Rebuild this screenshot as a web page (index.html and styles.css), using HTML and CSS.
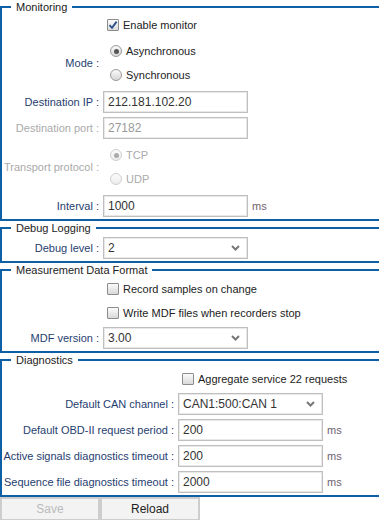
FILE: index.html
```html
<!DOCTYPE html>
<html lang="en">

<head>
    <meta charset="UTF-8">
    <meta name="viewport" content="width=device-width, initial-scale=1.0">
    <title>Settings</title>
    <link rel="stylesheet" href="styles.css">
</head>

<body>
    <form class="settings">
        <fieldset class="group">
            <legend>Monitoring</legend>
            <div class="rows">
                <div class="row row-check first">
                    <span class="lbl"></span>
                    <label class="check"><span class="box"><svg width="10" height="10" viewBox="0 0 10 10"><path d="M1.5 5.2 L4 7.8 L8.6 1.6" fill="none" stroke="#2c4f8c" stroke-width="1.8"/></svg></span>Enable monitor</label>
                </div>
                <div class="row row-radios">
                    <span class="lbl">Mode :</span>
                    <div class="radios">
                        <label class="radio"><span class="dot on"></span>Asynchronous</label>
                        <label class="radio"><span class="dot"></span>Synchronous</label>
                    </div>
                </div>
                <div class="row">
                    <span class="lbl">Destination IP :</span>
                    <input type="text" class="field" value="212.181.102.20">
                </div>
                <div class="row">
                    <span class="lbl off">Destination port :</span>
                    <input type="text" class="field" value="27182" disabled>
                </div>
                <div class="row row-radios">
                    <span class="lbl off">Transport protocol :</span>
                    <div class="radios off">
                        <label class="radio"><span class="dot on"></span>TCP</label>
                        <label class="radio"><span class="dot"></span>UDP</label>
                    </div>
                </div>
                <div class="row">
                    <span class="lbl">Interval :</span>
                    <input type="text" class="field" value="1000">
                    <span class="unit">ms</span>
                </div>
            </div>
        </fieldset>

        <fieldset class="group">
            <legend>Debug Logging</legend>
            <div class="rows">
                <div class="row">
                    <span class="lbl">Debug level :</span>
                    <div class="pick">
                        <select class="field"><option>2</option></select>
                        <svg class="chev" width="9" height="6" viewBox="0 0 9 6"><path d="M1 1 L4.5 4.5 L8 1" fill="none" stroke="#777" stroke-width="2"/></svg>
                    </div>
                </div>
            </div>
        </fieldset>

        <fieldset class="group">
            <legend>Measurement Data Format</legend>
            <div class="rows">
                <div class="row row-check">
                    <span class="lbl"></span>
                    <label class="check"><span class="box"></span>Record samples on change</label>
                </div>
                <div class="row row-check">
                    <span class="lbl"></span>
                    <label class="check"><span class="box"></span>Write MDF files when recorders stop</label>
                </div>
                <div class="row">
                    <span class="lbl">MDF version :</span>
                    <div class="pick">
                        <select class="field"><option>3.00</option></select>
                        <svg class="chev" width="9" height="6" viewBox="0 0 9 6"><path d="M1 1 L4.5 4.5 L8 1" fill="none" stroke="#777" stroke-width="2"/></svg>
                    </div>
                </div>
            </div>
        </fieldset>

        <fieldset class="group wide">
            <legend>Diagnostics</legend>
            <div class="rows">
                <div class="row row-check">
                    <span class="lbl"></span>
                    <label class="check"><span class="box"></span>Aggregate service 22 requests</label>
                </div>
                <div class="row">
                    <span class="lbl">Default CAN channel :</span>
                    <div class="pick">
                        <select class="field"><option>CAN1:500:CAN 1</option></select>
                        <svg class="chev" width="9" height="6" viewBox="0 0 9 6"><path d="M1 1 L4.5 4.5 L8 1" fill="none" stroke="#777" stroke-width="2"/></svg>
                    </div>
                </div>
                <div class="row">
                    <span class="lbl">Default OBD-II request period :</span>
                    <input type="text" class="field" value="200">
                    <span class="unit">ms</span>
                </div>
                <div class="row">
                    <span class="lbl">Active signals diagnostics timeout :</span>
                    <input type="text" class="field" value="200">
                    <span class="unit">ms</span>
                </div>
                <div class="row">
                    <span class="lbl">Sequence file diagnostics timeout :</span>
                    <input type="text" class="field" value="2000">
                    <span class="unit">ms</span>
                </div>
            </div>
        </fieldset>

        <div class="actions">
            <button type="button" disabled>Save</button>
            <button type="button">Reload</button>
        </div>
    </form>
</body>

</html>
```

FILE: styles.css
```css
body {
    margin: 0;
    background-color: #fff;
    font-family: 'Liberation Sans', Arial, sans-serif;
    font-size: 11px;
    color: #222;
    overflow: hidden;
}

.settings {
    margin: 0;
}

.group {
    margin: 0;
    padding: 0;
    border: 2px solid #0d5fa6;
    border-right: none;
    min-inline-size: 0;
}

.group legend {
    margin-left: 9px;
    padding: 0 5px;
    font-size: 11px;
    line-height: 14px;
    color: #222;
}

.rows {
    display: flex;
    flex-direction: column;
    gap: 4px;
    padding: 2px 0;
}

.row {
    display: flex;
    align-items: center;
    height: 22px;
}

.row-check {
    height: 20px;
}

.row-check.first {
    height: 18px;
    margin-bottom: 1px;
}

.row-radios {
    height: 48px;
}

.lbl {
    flex: none;
    width: 101px;
    padding-right: 4px;
    box-sizing: border-box;
    text-align: right;
    color: #1f3e70;
    white-space: nowrap;
}

.wide .lbl {
    width: 176px;
}

.lbl.off {
    color: #aaa;
}

/* checkboxes */
.check {
    display: flex;
    align-items: center;
    color: #222;
}

.box {
    display: flex;
    align-items: center;
    justify-content: center;
    width: 12px;
    height: 12px;
    margin: 0 4px 0 4px;
    box-sizing: border-box;
    border: 1px solid #8c8c8c;
    border-radius: 1px;
    background: linear-gradient(#fbfbfb, #d9d9d9);
}

/* radios */
.radios {
    display: flex;
    flex-direction: column;
}

.radio {
    display: flex;
    align-items: center;
    height: 24px;
    color: #222;
}

.dot {
    display: flex;
    align-items: center;
    justify-content: center;
    width: 12px;
    height: 12px;
    margin: 0 4px 0 7px;
    box-sizing: border-box;
    border: 1px solid #9a9a9a;
    border-radius: 50%;
    background: linear-gradient(#fafafa, #d6d6d6);
}

.dot.on::after {
    content: "";
    width: 5px;
    height: 5px;
    border-radius: 50%;
    background-color: #555;
}

.radios.off .radio {
    color: #aaa;
}

.radios.off .dot {
    border-color: #cfcfcf;
    background: linear-gradient(#fcfcfc, #ececec);
}

.radios.off .dot.on::after {
    background-color: #aaa;
}

/* inputs and selects */
.field {
    width: 145px;
    height: 22px;
    margin: 0;
    padding: 0 4px;
    box-sizing: border-box;
    border: 1px solid #bfbfbf;
    box-shadow: inset 0 0 0 1px #e8e8e8;
    border-radius: 0;
    background-color: #fff;
    font-family: 'Liberation Sans', Arial, sans-serif;
    font-size: 12px;
    color: #333;
    outline: none;
}

.field:disabled {
    color: #999;
    background-color: #fff;
}

.pick {
    position: relative;
    height: 22px;
}

.pick select {
    appearance: none;
    -webkit-appearance: none;
}

.chev {
    position: absolute;
    right: 8px;
    top: 8px;
    pointer-events: none;
}

.unit {
    margin-left: 4px;
    color: #6f6270;
}

/* buttons */
.actions {
    display: flex;
}

.actions button {
    width: 100px;
    height: 24px;
    margin: 0;
    border: 2px solid #cdcdcd;
    background-color: #f3f3f3;
    font-family: 'Liberation Sans', Arial, sans-serif;
    font-size: 12px;
    color: #222;
}

.actions button:disabled {
    color: #bbb;
}
```
